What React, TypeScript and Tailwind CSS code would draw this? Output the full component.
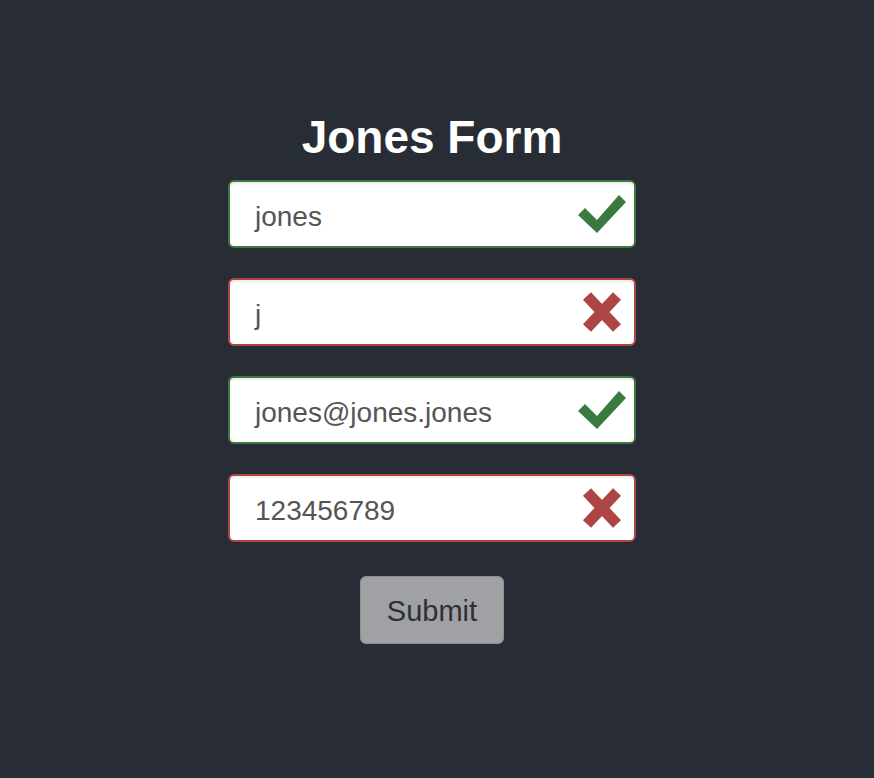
import React from 'react';

type Field = { value: string; valid: boolean };

const fields: Field[] = [
  { value: 'jones', valid: true },
  { value: 'j', valid: false },
  { value: 'jones@jones.jones', valid: true },
  { value: '123456789', valid: false },
];

const CheckIcon = () => (
  <svg width="48" height="40" viewBox="0 0 48 40">
    <polygon points="0,21 7,14 19,26 41,1 48,8 19,39" fill="#3b7a3f" />
  </svg>
);

const CrossIcon = () => (
  <svg width="40" height="42" viewBox="0 0 40 42">
    <path d="M5 5 L35 37 M35 5 L5 37" stroke="#ad4545" strokeWidth="11" />
  </svg>
);

const App = () => {
  return (
    <div className="min-h-screen bg-[#282c34] flex flex-col items-center pt-[111px] pr-[10px] font-['Liberation_Sans',Arial,sans-serif]">
      <h1 className="text-white font-bold text-[46px] leading-[52px] mb-[17px]">Jones Form</h1>

      <div className="flex flex-col gap-[30px]">
        {fields.map((f, i) => (
          <div
            key={i}
            className={`w-[408px] h-[68px] bg-white rounded-[6px] border-2 shadow-[inset_0_2px_3px_rgba(0,0,0,0.08)] flex items-center justify-between pl-[25px] pr-[8px] ${
              f.valid ? 'border-[#3b7a3f]' : 'border-[#ad4545]'
            }`}
          >
            <span className="text-[28px] text-[#555555] pt-[5px]">{f.value}</span>
            {f.valid ? <CheckIcon /> : <span className="mr-[4px] flex"><CrossIcon /></span>}
          </div>
        ))}
      </div>

      <button className="mt-[34px] w-[144px] h-[68px] bg-[#a0a1a5] border border-[#8d8e92] rounded-[6px] text-[29px] text-[#2e3034] pt-[3px]">
        Submit
      </button>
    </div>
  );
};

export default App;
